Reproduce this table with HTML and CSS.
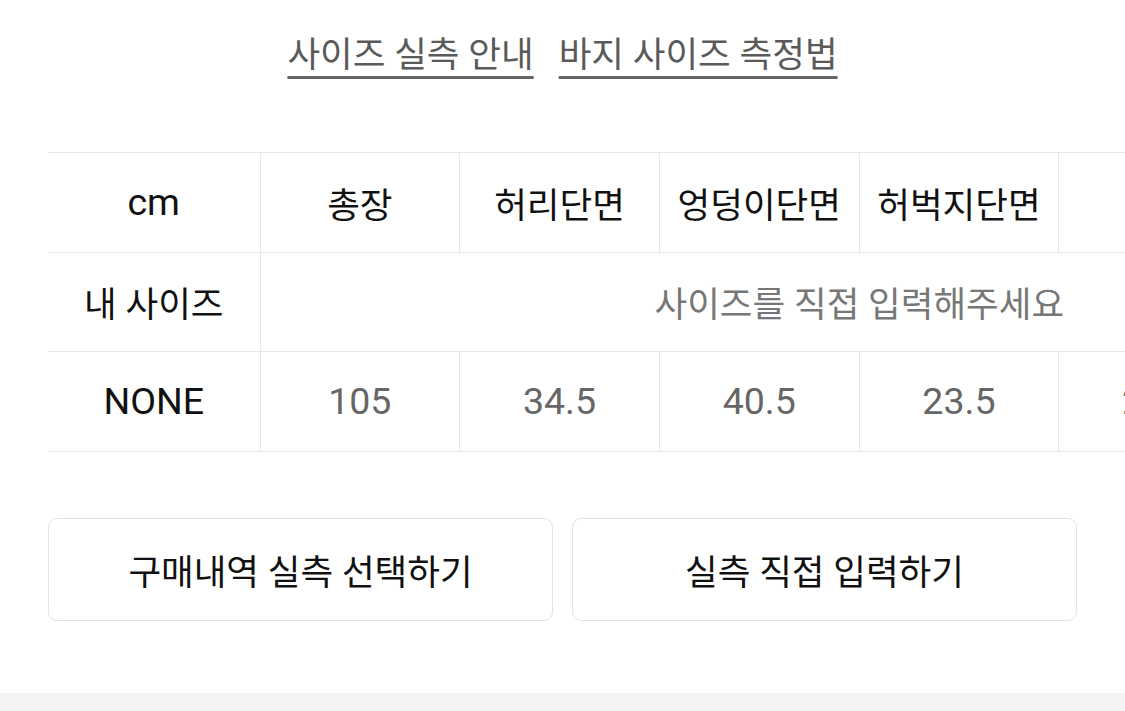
FILE: index.html
```html
<!DOCTYPE html>
<html lang="ko">
<head>
<meta charset="utf-8">
<title>사이즈 실측</title>
<link rel="stylesheet" href="styles.css">
</head>
<body>
<div class="page">
  <nav class="guide-links">
    <a class="guide-link" href="#">사이즈 실측 안내</a>
    <a class="guide-link" href="#">바지 사이즈 측정법</a>
  </nav>

  <div class="table-wrap">
    <table class="size-table">
      <colgroup>
        <col class="col-label">
        <col class="col-data"><col class="col-data"><col class="col-data">
        <col class="col-data"><col class="col-data"><col class="col-data">
      </colgroup>
      <tr>
        <th class="latin">cm</th>
        <th>총장</th>
        <th>허리단면</th>
        <th>엉덩이단면</th>
        <th>허벅지단면</th>
        <th>밑위</th>
        <th>밑단단면</th>
      </tr>
      <tr>
        <th>내 사이즈</th>
        <td class="placeholder" colspan="6">사이즈를 직접 입력해주세요</td>
      </tr>
      <tr>
        <th class="latin">NONE</th>
        <td class="latin">105</td>
        <td class="latin">34.5</td>
        <td class="latin">40.5</td>
        <td class="latin">23.5</td>
        <td class="latin">26.5</td>
        <td class="latin">20</td>
      </tr>
    </table>
  </div>

  <div class="actions">
    <button class="action-btn" type="button">구매내역 실측 선택하기</button>
    <button class="action-btn" type="button">실측 직접 입력하기</button>
  </div>
</div>
<div class="footer-band"></div>
</body>
</html>
```

FILE: styles.css
```css
* {
  box-sizing: border-box;
}

html, body {
  margin: 0;
  padding: 0;
  background: #ffffff;
  overflow: hidden;
}

body {
  font-family: Roboto, "Noto Sans CJK KR", sans-serif;
  color: #111111;
}

.page {
  padding: 0 48px;
}

.guide-links {
  display: flex;
  justify-content: center;
  gap: 25px;
  padding-top: 30px;
  height: 152px;
}

.guide-link {
  font-size: 35.5px;
  line-height: 50px;
  height: 50px;
  color: #5a5a5a;
  text-decoration: underline;
  text-decoration-thickness: 3px;
  text-underline-offset: 9px;
  text-decoration-color: #666666;
}

.table-wrap {
  margin-right: -48px;
  overflow: hidden;
}

.size-table {
  border-collapse: collapse;
  table-layout: fixed;
  width: 1410px;
}

.col-label {
  width: 212px;
}

.col-data {
  width: 199.7px;
}

.size-table th,
.size-table td {
  height: 99.5px;
  padding: 0;
  text-align: center;
  vertical-align: middle;
  font-size: 35.5px;
  white-space: nowrap;
  overflow: hidden;
  border-top: 1.5px solid #e6e6e6;
  border-bottom: 1.5px solid #e6e6e6;
  border-left: 1.5px solid #e6e6e6;
}

.size-table tr > :first-child {
  border-left: none;
}

.size-table th {
  font-weight: normal;
  color: #111111;
}

.size-table td {
  color: #666666;
}

.size-table .latin {
  font-size: 37.5px;
}

.size-table td.placeholder {
  color: #777777;
}

.actions {
  display: flex;
  gap: 19px;
  margin-top: 66px;
}

.action-btn {
  flex: 1;
  height: 103px;
  background: #ffffff;
  border: 1.5px solid #e4e4e4;
  border-radius: 9px;
  font-family: inherit;
  font-size: 35.5px;
  color: #111111;
  padding: 0;
}

.footer-band {
  margin-top: 72px;
  height: 40px;
  background: #f4f4f4;
}
```
